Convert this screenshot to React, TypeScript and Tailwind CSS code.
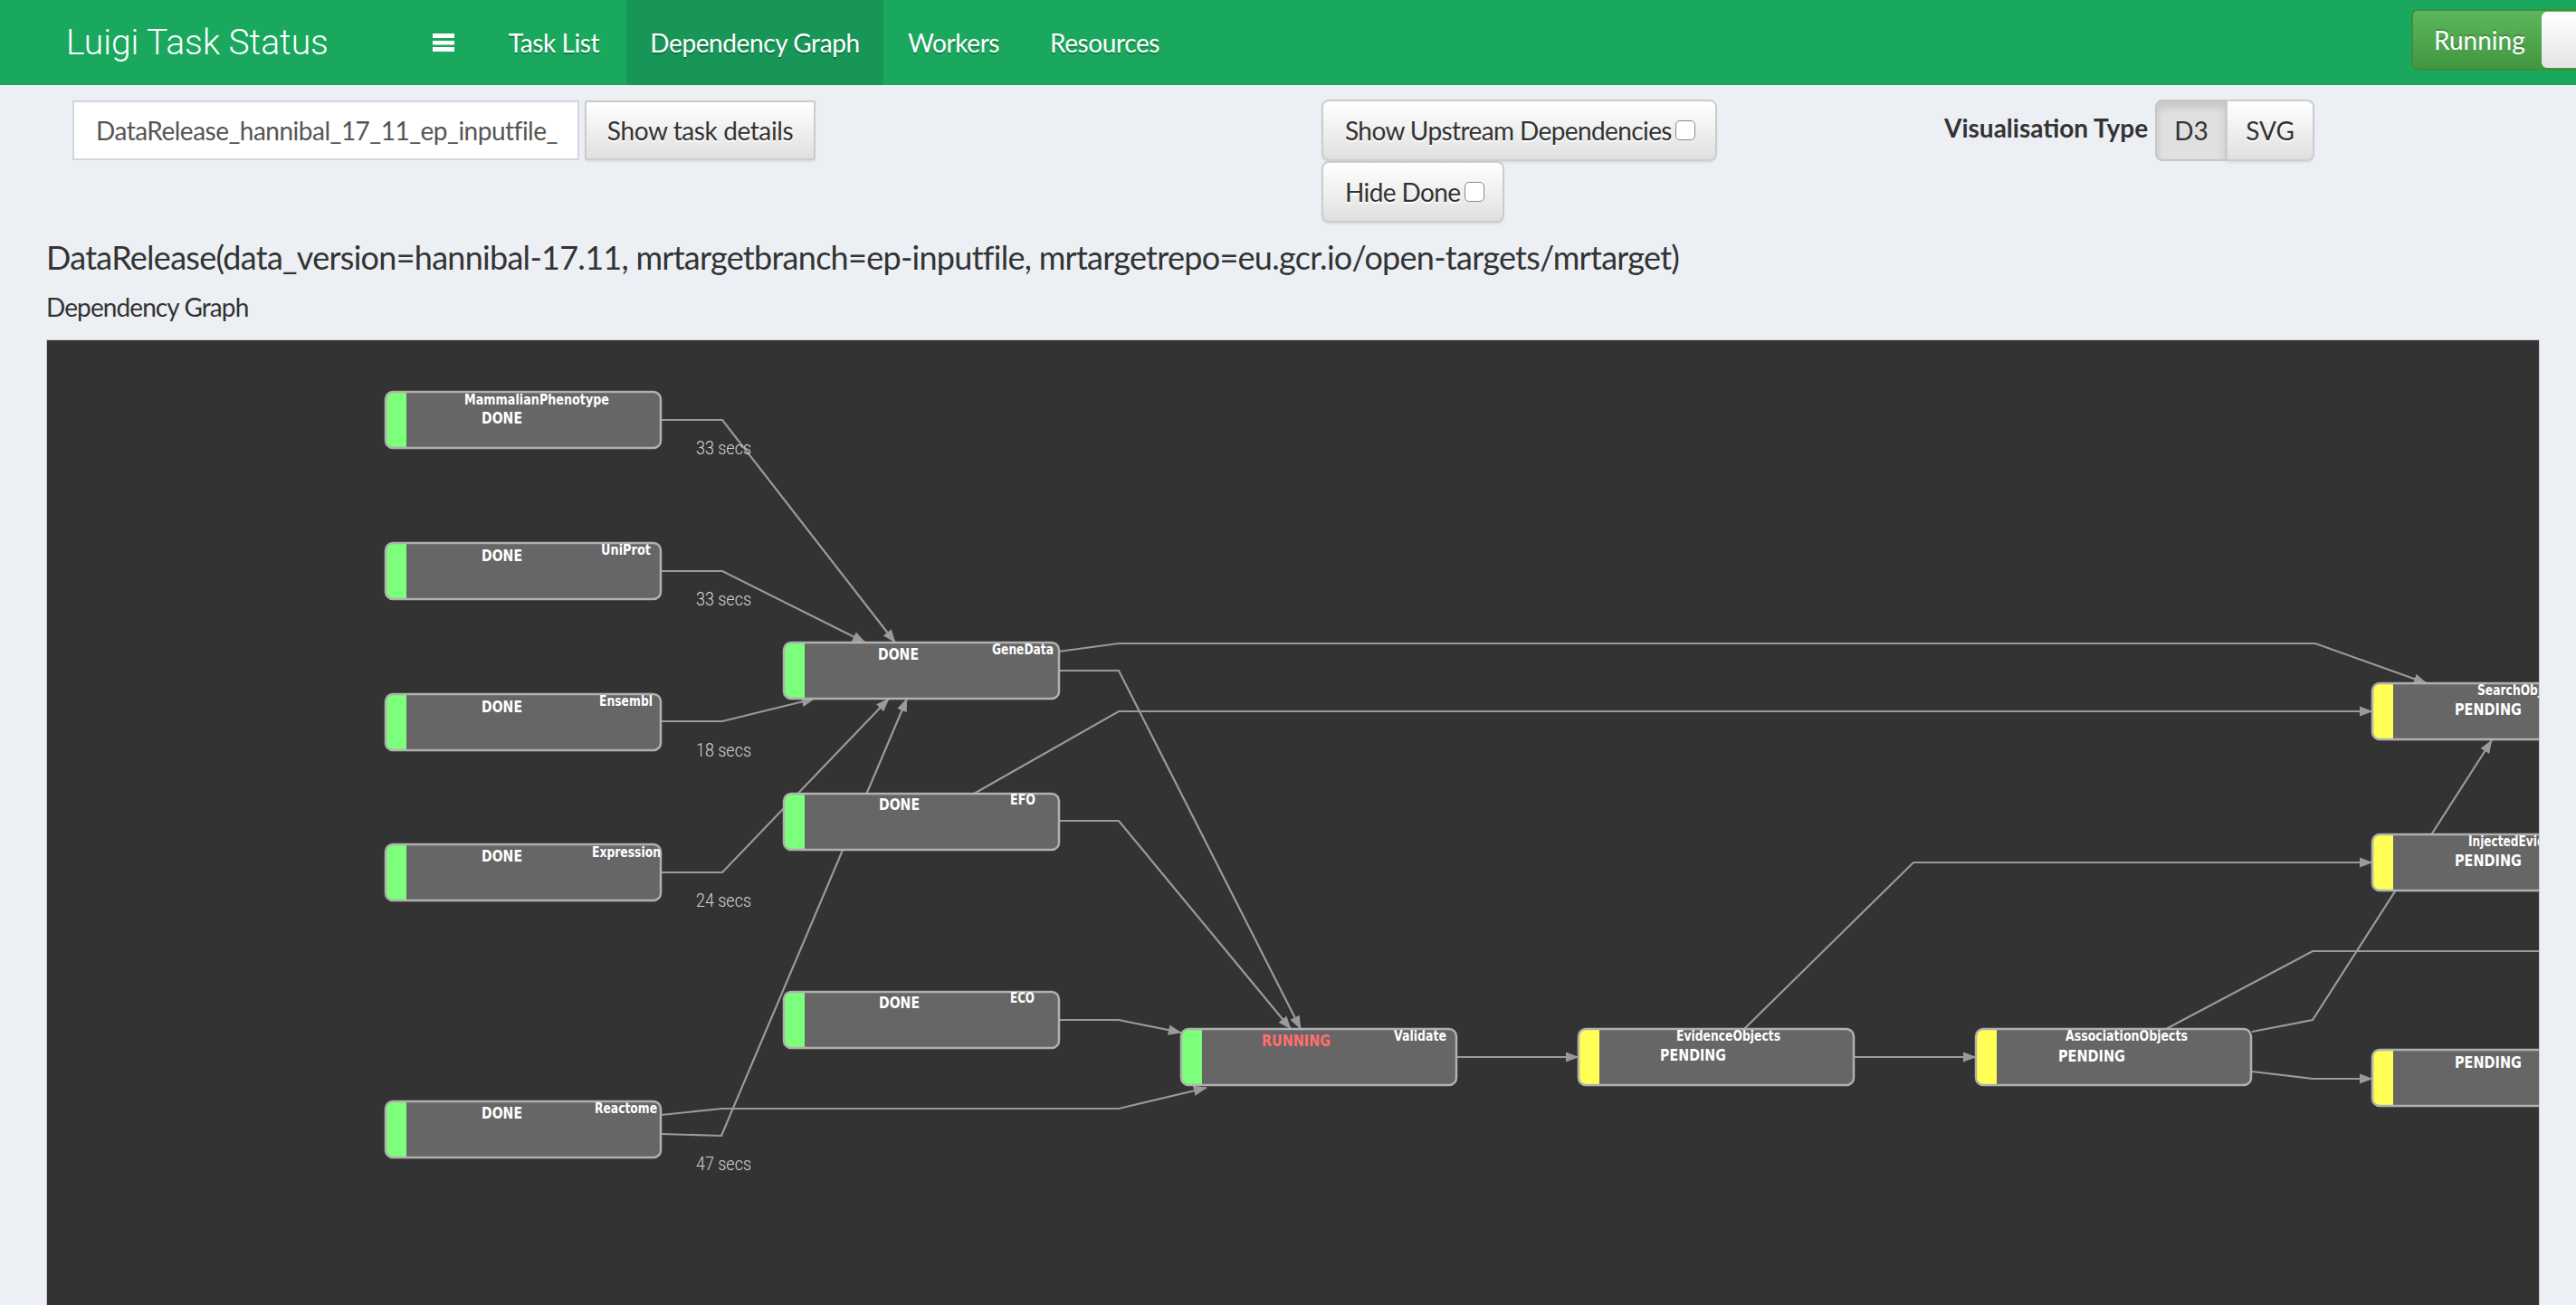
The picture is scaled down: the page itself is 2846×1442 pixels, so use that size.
import React from 'react';

type Status = 'DONE' | 'PENDING' | 'RUNNING';

interface GraphNode {
  name: string;
  x: number;
  y: number;
  status: Status;
  nx: number; // name x (relative)
  nw: number; // name width
  nb: number; // name baseline (relative)
  sx: number;
  sw: number;
  sb: number;
}

const NODE_W = 304;
const NODE_H = 62;

const nodes: GraphNode[] = [
  { name: 'MammalianPhenotype', x: 426, y: 433, status: 'DONE', nx: 87, nw: 160, nb: 14, sx: 106, sw: 45, sb: 35 },
  { name: 'UniProt', x: 426, y: 600, status: 'DONE', nx: 238, nw: 55, nb: 13, sx: 106, sw: 45, sb: 20 },
  { name: 'Ensembl', x: 426, y: 767, status: 'DONE', nx: 236, nw: 59, nb: 13, sx: 106, sw: 45, sb: 20 },
  { name: 'Expression', x: 426, y: 933, status: 'DONE', nx: 228, nw: 76, nb: 14, sx: 106, sw: 45, sb: 19 },
  { name: 'Reactome', x: 426, y: 1217, status: 'DONE', nx: 231, nw: 69, nb: 13, sx: 106, sw: 45, sb: 19 },
  { name: 'GeneData', x: 866, y: 710, status: 'DONE', nx: 230, nw: 68, nb: 13, sx: 104, sw: 45, sb: 19 },
  { name: 'EFO', x: 866, y: 877, status: 'DONE', nx: 250, nw: 28, nb: 12, sx: 105, sw: 45, sb: 18 },
  { name: 'ECO', x: 866, y: 1096, status: 'DONE', nx: 250, nw: 27, nb: 12, sx: 105, sw: 45, sb: 18 },
  { name: 'Validate', x: 1305, y: 1137, status: 'RUNNING', nx: 235, nw: 58, nb: 13, sx: 89, sw: 76, sb: 19 },
  { name: 'EvidenceObjects', x: 1744, y: 1137, status: 'PENDING', nx: 108, nw: 115, nb: 13, sx: 90, sw: 73, sb: 35 },
  { name: 'AssociationObjects', x: 2183, y: 1137, status: 'PENDING', nx: 99, nw: 135, nb: 13, sx: 91, sw: 74, sb: 36 },
  { name: 'SearchObjects', x: 2621, y: 755, status: 'PENDING', nx: 116, nw: 100, nb: 13, sx: 91, sw: 74, sb: 35 },
  { name: 'InjectedEvidence', x: 2621, y: 922, status: 'PENDING', nx: 106, nw: 117, nb: 13, sx: 91, sw: 74, sb: 35 },
  { name: '', x: 2621, y: 1160, status: 'PENDING', nx: 235, nw: 80, nb: 13, sx: 91, sw: 74, sb: 20 },
];

const edges: number[][] = [
  [730, 464, 798, 464, 989, 710],
  [730, 631, 798, 631, 956, 710],
  [730, 797, 798, 797, 900, 772],
  [730, 964, 798, 964, 982, 772],
  [730, 1253, 797, 1255, 1002, 772],
  [730, 1232, 798, 1225, 1236, 1225, 1333, 1202],
  [1169, 720, 1236, 711, 2558, 711, 2681, 755],
  [1169, 741, 1236, 741, 1437, 1137],
  [1076, 877, 1236, 786, 2621, 786],
  [1169, 907, 1236, 907, 1426, 1137],
  [1169, 1127, 1236, 1127, 1305, 1141],
  [1607, 1168, 1744, 1168],
  [2047, 1168, 2183, 1168],
  [1927, 1137, 2114, 953, 2621, 953],
  [2393, 1137, 2555, 1051, 2900, 1051],
  [2488, 1140, 2555, 1127, 2753, 818],
  [2488, 1184, 2555, 1192, 2621, 1192],
];

const durations = [
  { text: '33 secs', y: 502 },
  { text: '33 secs', y: 669 },
  { text: '18 secs', y: 836 },
  { text: '24 secs', y: 1002 },
  { text: '47 secs', y: 1293 },
];

const barColor: Record<Status, string> = {
  DONE: '#7cff7a',
  RUNNING: '#7cff7a',
  PENDING: '#ffff55',
};

const toPath = (pts: number[]) => {
  let d = '';
  for (let i = 0; i < pts.length; i += 2) {
    d += (i === 0 ? 'M' : 'L') + pts[i] + ',' + pts[i + 1] + ' ';
  }
  return d;
};

const TaskNode: React.FC<{ node: GraphNode }> = ({ node }) => {
  const { x, y } = node;
  const r = 8;
  const bar = 23;
  return (
    <g>
      <rect x={x} y={y} width={NODE_W} height={NODE_H} rx={r} fill="#666666" />
      <path
        d={`M${x + r},${y} H${x + bar} V${y + NODE_H} H${x + r} A${r},${r} 0 0 1 ${x},${y + NODE_H - r} V${y + r} A${r},${r} 0 0 1 ${x + r},${y} Z`}
        fill={barColor[node.status]}
      />
      <rect x={x} y={y} width={NODE_W} height={NODE_H} rx={r} fill="none" stroke="#b0b0b0" strokeWidth={2.5} />
      {node.name && (
        <text
          x={x + node.nx}
          y={y + node.nb}
          fill="#ffffff"
          fontFamily="'DejaVu Sans', sans-serif"
          fontWeight="bold"
          fontSize={15}
          textLength={node.nw}
          lengthAdjust="spacingAndGlyphs"
        >
          {node.name}
        </text>
      )}
      <text
        x={x + node.sx}
        y={y + node.sb}
        fill={node.status === 'RUNNING' ? '#ff6f6f' : '#ffffff'}
        fontFamily="'DejaVu Sans', sans-serif"
        fontWeight="bold"
        fontSize={18}
        textLength={node.sw}
        lengthAdjust="spacingAndGlyphs"
      >
        {node.status}
      </text>
    </g>
  );
};

const DependencyGraph: React.FC = () => (
  <svg width={2753} height={1100} className="block">
    <defs>
      <marker
        id="arrowhead"
        viewBox="0 0 10 10"
        refX="9.5"
        refY="5"
        markerUnits="userSpaceOnUse"
        markerWidth="15"
        markerHeight="15"
        orient="auto"
      >
        <path d="M0,1.2 L10,5 L0,8.8 z" fill="#9a9a9a" />
      </marker>
    </defs>
    <g transform="translate(-52 -376)">
      {edges.map((pts, i) => (
        <path key={i} d={toPath(pts)} fill="none" stroke="#9a9a9a" strokeWidth={2.2} markerEnd="url(#arrowhead)" />
      ))}
      {durations.map((d, i) => (
        <text
          key={i}
          x={769}
          y={d.y}
          fill="#d4d4d4"
          fontFamily="Roboto, sans-serif"
          fontWeight={300}
          fontSize={21}
          textLength={61}
          lengthAdjust="spacingAndGlyphs"
        >
          {d.text}
        </text>
      ))}
      {nodes.map((n, i) => (
        <TaskNode key={i} node={n} />
      ))}
    </g>
  </svg>
);

const grayBtn =
  'border-2 border-[#cccccc] bg-[linear-gradient(to_bottom,#ffffff,#e0e0e0)] text-[#333] [text-shadow:0_2px_0_#fff] shadow-[inset_0_2px_0_rgba(255,255,255,0.15),0_2px_2px_rgba(0,0,0,0.075)]';

const Checkbox: React.FC = () => (
  <span className="ml-[4px] inline-block shrink-0 w-[22px] h-[22px] rounded-[5px] border-[1.5px] border-[#8a8a8a] bg-white" />
);

export default function App() {
  return (
    <div className="w-[2846px] h-[1442px] overflow-hidden bg-[#ecf0f5] font-['Lato',sans-serif]">
      {/* top navbar */}
      <div className="h-[94px] bg-[#19a85d] flex items-stretch text-white">
        <div className="w-[460px] pl-[73px] flex items-center text-[39px] font-light font-['Roboto',sans-serif]">
          Luigi Task Status
        </div>
        <div className="w-[72px] pl-[18px] flex items-center">
          <svg width="24" height="20" viewBox="0 0 24 20">
            <rect x="0" y="0" width="24" height="5" fill="#fff" />
            <rect x="0" y="8" width="24" height="4.5" fill="#fff" />
            <rect x="0" y="15" width="24" height="5" fill="#fff" />
          </svg>
        </div>
        <nav className="flex items-stretch text-[28px] tracking-[-0.4px] [text-shadow:0_2px_0_rgba(0,0,0,0.25)]">
          <a className="w-[160px] flex items-center justify-center">Task List</a>
          <a className="w-[284px] flex items-center justify-center bg-[#179658]">Dependency Graph</a>
          <a className="w-[155px] flex items-center justify-center">Workers</a>
          <a className="w-[179px] flex items-center justify-center">Resources</a>
        </nav>
        <div className="ml-auto pt-[10px] flex items-start overflow-hidden">
          <div className="w-[200px] h-[68px] -mr-[18px] rounded-[7px] border-2 border-[#3e8f3e] bg-[linear-gradient(to_bottom,#5cb85c,#419641)] flex items-center">
            <span className="pl-[23px] text-[28px] [text-shadow:0_-2px_0_rgba(0,0,0,0.2)]">Running</span>
            <span className="ml-auto mr-[2px] w-[52px] h-[62px] rounded-l-[6px] bg-[linear-gradient(to_bottom,#ffffff,#e4e4e4)]" />
          </div>
        </div>
      </div>

      {/* controls */}
      <div className="flex pl-[80px] pt-[16px]">
        <div className="w-[1380px] flex gap-[6px] pt-[1px]">
          <div className="w-[560px] h-[66px] border-2 border-[#d2d6de] bg-white pl-[24px] pr-[20px] flex items-center overflow-hidden whitespace-nowrap text-[28px] tracking-[-0.5px] text-[#555]">
            DataRelease_hannibal_17_11_ep_inputfile_
          </div>
          <button className={`w-[255px] h-[66px] rounded-[2px] text-[28px] tracking-[-0.4px] ${grayBtn}`}>Show task details</button>
        </div>
        <div className="w-[688px] flex flex-col items-start">
          <button className={`h-[68px] w-[437px] pl-[24px] rounded-[8px] flex items-center text-[28px] tracking-[-0.6px] ${grayBtn}`}>
            Show Upstream Dependencies
            <Checkbox />
          </button>
          <button className={`h-[68px] w-[202px] pl-[24px] rounded-[8px] flex items-center text-[28px] tracking-[-0.6px] ${grayBtn}`}>
            Hide Done
            <Checkbox />
          </button>
        </div>
        <div className="flex items-start">
          <div className="w-[233px] h-[62px] flex items-center font-bold text-[28px] text-[#333]">Visualisation Type</div>
          <div className="flex">
            <button className="w-[80px] h-[68px] rounded-l-[8px] border-2 border-[#c6c6c6] bg-[#e0e0e0] text-[28px] text-[#333] shadow-[inset_0_6px_10px_rgba(0,0,0,0.125)]">
              D3
            </button>
            <button className={`w-[98px] h-[68px] -ml-[2px] rounded-r-[8px] text-[28px] ${grayBtn}`}>SVG</button>
          </div>
        </div>
      </div>

      {/* title */}
      <h1 className="ml-[51px] mt-[17px] text-[36px] leading-[43px] tracking-[-0.72px] text-[#333] whitespace-nowrap">
        DataRelease(data_version=hannibal-17.11, mrtargetbranch=ep-inputfile, mrtargetrepo=eu.gcr.io/open-targets/mrtarget)
      </h1>
      <div className="ml-[51px] mt-[16px] text-[28px] leading-[34px] tracking-[-0.9px] text-[#333]">Dependency Graph</div>

      {/* graph */}
      <div className="ml-[51px] mt-[19px] w-[2755px] h-[1100px] border border-[#c9ccd1] bg-[#333333] overflow-hidden">
        <DependencyGraph />
      </div>
    </div>
  );
}
